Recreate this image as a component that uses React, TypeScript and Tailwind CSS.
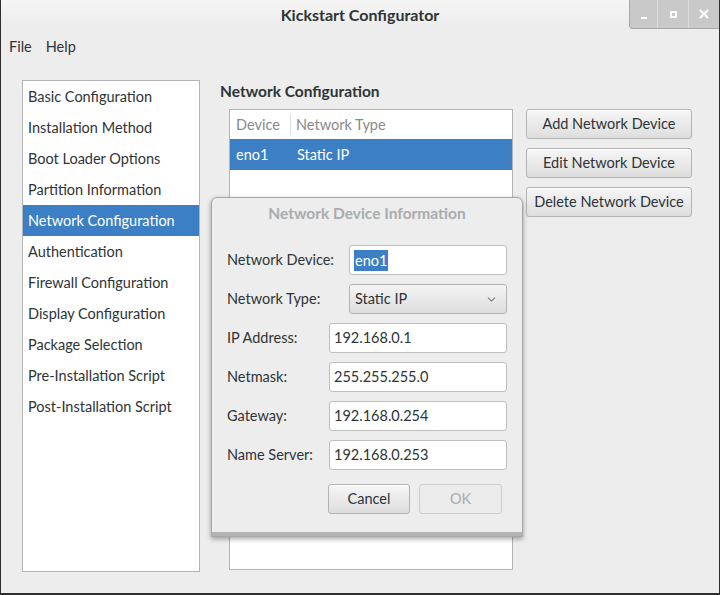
import { ChevronDown } from "lucide-react";

const sections = [
  "Basic Configuration",
  "Installation Method",
  "Boot Loader Options",
  "Partition Information",
  "Network Configuration",
  "Authentication",
  "Firewall Configuration",
  "Display Configuration",
  "Package Selection",
  "Pre-Installation Script",
  "Post-Installation Script",
];

const addressRows = [
  { label: "IP Address:", value: "192.168.0.1" },
  { label: "Netmask:", value: "255.255.255.0" },
  { label: "Gateway:", value: "192.168.0.254" },
  { label: "Name Server:", value: "192.168.0.253" },
];

function GtkButton({ label, className = "" }: { label: string; className?: string }) {
  return (
    <button className={`h-[30px] rounded-[3px] border border-[#b3b3b3] bg-gradient-to-b from-[#f6f6f6] to-[#dedede] text-[14.5px] text-[#2e3436] shadow-[inset_0_1px_0_#ffffff] ${className}`}>
      {label}
    </button>
  );
}

function Field({ children, className = "" }: { children: React.ReactNode; className?: string }) {
  return (
    <div className={`flex h-[30px] items-center rounded-[3px] border border-[#bdbdbd] bg-white px-[4px] text-[14.5px] text-[#2e3436] ${className}`}>
      {children}
    </div>
  );
}

export default function App() {
  return (
    <div className="relative flex h-[595px] w-[720px] flex-col overflow-hidden border-x border-b-2 border-[#2f2f2f] bg-[#ededed] font-['Lato',sans-serif] text-[#2e3436]">
      {/* title bar */}
      <div className="grid h-[30px] shrink-0 grid-cols-[90px_1fr_90px] bg-gradient-to-b from-[#f5f5f5] to-[#ececec]">
        <div />
        <div className="flex items-center justify-center text-[16px] font-bold text-[#2e3436]">
          Kickstart Configurator
        </div>
        <div className="flex h-[29px] overflow-hidden rounded-bl-[4px] border-b border-l border-[#a8a8a8] bg-[#c9c9c9] text-white">
          <div className="flex w-[28px] items-end justify-center border-r border-[#dcdcdc] pb-[9px]">
            <div className="h-[2px] w-[6px] bg-white" />
          </div>
          <div className="flex w-[31px] items-center justify-center border-r border-[#dcdcdc]">
            <div className="h-[7px] w-[7px] border-2 border-white" />
          </div>
          <div className="flex flex-1 items-center justify-center">
            <svg width="10" height="10" viewBox="0 0 10 10">
              <path d="M1 1L9 9M9 1L1 9" stroke="white" strokeWidth="2.2" />
            </svg>
          </div>
        </div>
      </div>

      {/* menu bar */}
      <div className="flex h-[34px] shrink-0 items-center gap-[14px] px-[8px] text-[14.5px]">
        <span>File</span>
        <span>Help</span>
      </div>

      {/* content */}
      <div className="flex pl-[21px] pt-[16px]">
        <div className="h-[492px] w-[178px] border border-[#b4b4b4] bg-white">
          {sections.map((s) => (
            <div
              key={s}
              className={`flex h-[31px] items-center px-[5px] text-[14.5px] ${
                s === "Network Configuration" ? "bg-[#3d7fc4] text-white" : "text-[#2e3436]"
              }`}
            >
              {s}
            </div>
          ))}
        </div>

        <div className="ml-[20px] flex flex-col">
          <div className="mt-[2px] flex h-[20px] items-center text-[15.5px] font-bold">Network Configuration</div>
          <div className="mt-[7px] flex">
            <div className="ml-[9px] h-[461px] w-[284px] border border-[#b4b4b4] bg-white text-[14.5px]">
              <div className="flex h-[29px] items-center text-[#888a8b]">
                <div className="w-[61px] border-r border-[#dedede] pl-[6px]">Device</div>
                <div className="pl-[5px]">Network Type</div>
              </div>
              <div className="flex h-[31px] items-center bg-[#3d7fc4] text-white">
                <div className="w-[61px] pl-[6px]">eno1</div>
                <div className="pl-[6px]">Static IP</div>
              </div>
            </div>
            <div className="ml-[13px] flex flex-col gap-[9px]">
              <GtkButton label="Add Network Device" className="w-[166px]" />
              <GtkButton label="Edit Network Device" className="w-[166px]" />
              <GtkButton label="Delete Network Device" className="w-[166px]" />
            </div>
          </div>
        </div>
      </div>

      {/* modal dialog */}
      <div className="absolute left-[210px] top-[197px] flex h-[340px] w-[312px] flex-col rounded-t-[6px] border border-[#a6a6a6] bg-[#ededed] pl-[15px] pr-[15px] shadow-[0_2px_5px_rgba(0,0,0,0.35),inset_0_-4px_0_#b3b3b3]">
        <div className="flex h-[32px] items-center justify-center text-[15.5px] font-bold text-[#a9acad]">
          Network Device Information
        </div>
        <div className="mt-[15px] flex flex-col gap-[9px]">
          <div className="flex items-center">
            <span className="w-[122px] text-[14.5px]">Network Device:</span>
            <Field className="flex-1">
              <span className="bg-[#3d7fc4] px-[1px] leading-[21px] text-white">eno1</span>
            </Field>
          </div>
          <div className="flex items-center">
            <span className="w-[122px] text-[14.5px]">Network Type:</span>
            <div className="flex h-[30px] flex-1 items-center justify-between rounded-[3px] border border-[#b3b3b3] bg-gradient-to-b from-[#f4f4f4] to-[#dedede] pl-[5px] pr-[8px] text-[14.5px]">
              <span>Static IP</span>
              <ChevronDown size={13} strokeWidth={2} className="text-[#7a7e7f]" />
            </div>
          </div>
          {addressRows.map((r) => (
            <div key={r.label} className="flex items-center">
              <span className="w-[102px] text-[14.5px]">{r.label}</span>
              <Field className="flex-1">{r.value}</Field>
            </div>
          ))}
        </div>
        <div className="mt-[14px] flex justify-end gap-[9px] pr-[5px]">
          <GtkButton label="Cancel" className="w-[82px]" />
          <button className="h-[30px] w-[83px] rounded-[3px] border border-[#cdcdcd] bg-[#ececec] text-[14.5px] text-[#a9acad]">
            OK
          </button>
        </div>
      </div>
    </div>
  );
}
